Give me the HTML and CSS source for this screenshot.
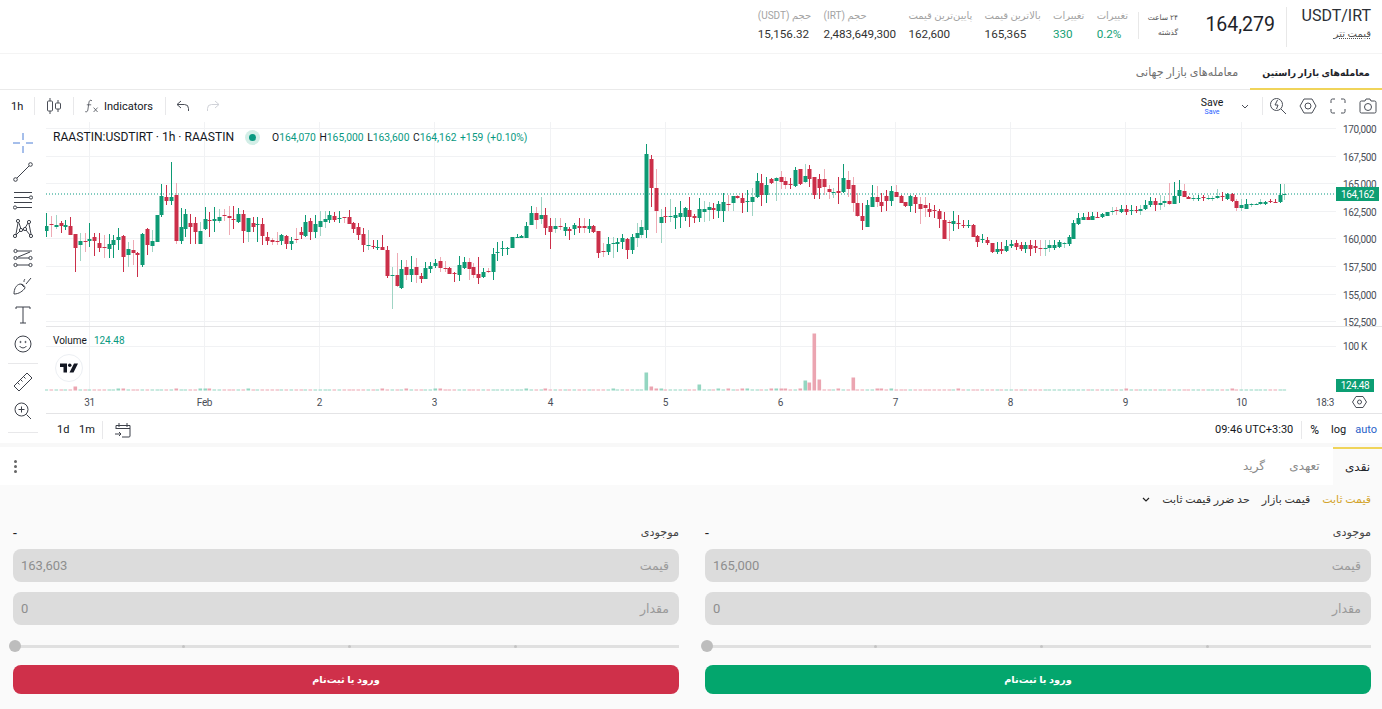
FILE: index.html
```html
<!DOCTYPE html>
<html lang="fa" dir="rtl">
<head>
<meta charset="utf-8">
<title>USDT/IRT</title>
<link rel="stylesheet" href="styles.css">
</head>
<body>
<header class="topbar">
  <div class="pair"><div class="pair-name">USDT/IRT</div><div class="pair-sub">قیمت تتر</div></div>
  <div class="last-price">164,279</div>
  <div class="period"><span>۲۴ ساعت</span><span>گذشته</span></div>
  <div class="stats">
    <div class="stat"><span class="stat-label">تغییرات</span><span class="stat-value up">0.2%</span></div>
    <div class="stat"><span class="stat-label">تغییرات</span><span class="stat-value up">330</span></div>
    <div class="stat"><span class="stat-label">بالاترین قیمت</span><span class="stat-value">165,365</span></div>
    <div class="stat"><span class="stat-label">پایین‌ترین قیمت</span><span class="stat-value">162,600</span></div>
    <div class="stat"><span class="stat-label">حجم (IRT)</span><span class="stat-value">2,483,649,300</span></div>
    <div class="stat"><span class="stat-label">حجم (USDT)</span><span class="stat-value">15,156.32</span></div>
  </div>
</header>

<nav class="market-tabs">
  <div class="market-tab active">معامله‌های بازار راستین</div>
  <div class="market-tab">معامله‌های بازار جهانی</div>
</nav>

<section class="tv" dir="ltr">
  <div class="tv-top">
    <div class="tv-group">
      <span class="tv-btn interval">1h</span><i class="tv-sep"></i>
      <svg class="ico candles" viewBox="0 0 16 18" width="16" height="18"><path d="M4 1v3M4 14v3M12 3v3M12 12v3" /><rect x="1.5" y="4" width="5" height="10" rx="1"/><rect x="9.5" y="6" width="5" height="6" rx="1"/></svg>
      <i class="tv-sep second"></i>
      <svg class="ico fx" viewBox="0 0 20 18" width="16" height="18"><path d="M10 2.5C8 1 6.6 2 6.3 4L4.8 14C4.5 16 3 17 1.500 16M3.500 7.500H9M12 11l5 5.500M17 11l-5 5.500"/></svg>
      <span class="tv-btn indicators">Indicators</span><i class="tv-sep third"></i>
      <svg class="ico undo" viewBox="0 0 14 12" width="14" height="12"><path d="M5 1 1 4.500 5 8M1 4.500h7.500a4 4 0 0 1 4 4V11"/></svg>
      <svg class="ico redo" viewBox="0 0 14 12" width="14" height="12"><path d="M9 1l4 3.500L9 8M13 4.500H5.500a4 4 0 0 0-4 4V11"/></svg>
    </div>
    <div class="tv-group">
      <div class="save"><span>Save</span><small>Save</small></div>
      <svg class="ico chev" viewBox="0 0 8 5" width="8" height="5"><path d="M1 1l3 3 3-3"/></svg>
      <i class="tv-sep save-sep"></i>
      <svg class="ico right-ico first" viewBox="0 0 18 18" width="18" height="18"><circle cx="7.500" cy="7.500" r="6"/><path d="M12 12l5 5M8.500 3 6 8h3l-1.500 4"/></svg>
      <svg class="ico right-ico" viewBox="0 0 18 18" width="18" height="18"><path d="M5 2h8l4 7-4 7H5L1 9z"/><circle cx="9" cy="9" r="3"/></svg>
      <svg class="ico right-ico" viewBox="-1 0 18 16" width="18" height="16"><path d="M1 5V2.500A1.500 1.500 0 0 1 2.500 1H5M11 1h2.500A1.500 1.500 0 0 1 15 2.500V5M15 11v2.500a1.500 1.500 0 0 1-1.500 1.500H11M5 15H2.500A1.500 1.500 0 0 1 1 13.500V11"/></svg>
      <svg class="ico right-ico" viewBox="0 0 18 16" width="18" height="16"><path d="M6 3l1-2h4l1 2h3.500A1.500 1.500 0 0 1 17 4.500v9a1.500 1.500 0 0 1-1.500 1.500h-13A1.500 1.500 0 0 1 1 13.500v-9A1.500 1.500 0 0 1 2.500 3z"/><circle cx="9" cy="9" r="3.500"/></svg>
    </div>
  </div>
  <div class="tv-body">
    <aside class="tools">
      <svg class="tool cross" viewBox="0 0 20 20" width="20" height="20"><path d="M10 0v7M10 13v7M0 10h7M13 10h7"/></svg>
      <svg class="tool" viewBox="0 0 20 20" width="20" height="20"><circle cx="2.500" cy="17.500" r="1.800"/><circle cx="17.500" cy="2.500" r="1.800"/><path d="M4 16 16 4"/></svg>
      <svg class="tool" viewBox="0 0 20 20" width="20" height="20"><path d="M1 2.500h18M1 7.500h15M1 12.500h18M4 17.500h15"/><circle cx="18" cy="7.500" r="1.600"/><circle cx="2" cy="17.500" r="1.600"/></svg>
      <svg class="tool" viewBox="0 0 20 20" width="20" height="20"><circle cx="5" cy="2" r="1.600"/><circle cx="16" cy="3" r="1.600"/><circle cx="2" cy="17" r="1.600"/><circle cx="18" cy="17" r="1.600"/><circle cx="8" cy="11" r="1.600"/><circle cx="12" cy="10" r="1.600"/><path d="M5 4 3 15M16 5l2 10M6 4l2 6M15 4l-3 5M3 16l4-4M17 16l-4-5M9.500 11h1"/></svg>
      <svg class="tool" viewBox="0 0 20 20" width="20" height="20"><circle cx="2.500" cy="3" r="1.600"/><circle cx="2.500" cy="10" r="1.600"/><circle cx="2.500" cy="17" r="1.600"/><circle cx="17.500" cy="10" r="1.600"/><circle cx="17.500" cy="17" r="1.600"/><path d="M4 3h15M4 10h12M4 17h12M5 9l12-5" /></svg>
      <svg class="tool" viewBox="0 0 20 20" width="20" height="20"><path d="M1 18c0-5 2-9 6-10 3 0 5 2 5 4-2 3-6 6-11 6zM8 8l3 3M13 8l5-6M12 3c-1 1-1 2-1 3"/></svg>
      <svg class="tool" viewBox="0 0 20 20" width="20" height="20"><path d="M3 4V2h14v2M10 2v16M7 18h6"/></svg>
      <svg class="tool" viewBox="0 0 20 20" width="20" height="20"><circle cx="10" cy="10" r="8"/><path d="M6.500 12c2 2.500 5 2.500 7 0"/><circle cx="7.500" cy="8" r=".6"/><circle cx="12.500" cy="8" r=".6"/></svg>
      <i class="tools-sep"></i>
      <svg class="tool" viewBox="0 0 20 20" width="20" height="20"><path d="M1 14 14 1l5 5L6 19zM4.500 10.500l2 2M7.500 7.500l2 2M10.500 4.500l2 2"/></svg>
      <svg class="tool" viewBox="0 0 20 20" width="20" height="20"><circle cx="8.500" cy="8.500" r="6.500"/><path d="M13.500 13.500 18 18M5.500 8.500h6M8.500 5.500v6"/></svg>
      <i class="tools-sep last"></i>
    </aside>
    <div class="tv-main">
      <div class="plot-wrap">
        <svg id="plot" class="plot" viewBox="45 122 1337 292" width="1337" height="292"></svg>
        <div class="legend">
          <span class="legend-title">RAASTIN:USDTIRT · 1h · RAASTIN</span>
          <span class="status"></span>
          <span class="ohlc"><b>O</b>164,070 <b>H</b>165,000 <b>L</b>163,600 <b>C</b>164,162 +159 (+0.10%)</span>
        </div>
        <div class="vol-legend"><span>Volume</span><em>124.48</em></div>
        <div class="tv-logo"><svg viewBox="0 0 36 20" width="18" height="10"><path d="M0 1h14v18H7V8H0z"/><circle cx="19.500" cy="4.500" r="3.500"/><path d="M36 1 27 19h-8l9-18z"/></svg></div>
      </div>
      <div class="tv-bottom">
        <div class="tv-group">
          <span class="range">1d</span><span class="range">1m</span><i class="tv-sep range-sep"></i>
          <svg class="ico cal" viewBox="0 0 16 16" width="16" height="16"><path d="M1 7V3.500h14V14a1 1 0 0 1-1 1H7M1 6.500h14M4 1v4M12 1v4M0 12h6M4 10l2 2-2 2"/></svg>
        </div>
        <div class="tv-group">
          <span class="clock">09:46 UTC+3:30</span><i class="tv-sep clock-sep"></i>
          <span class="mode pct">%</span><span class="mode">log</span><span class="mode auto">auto</span>
        </div>
      </div>
    </div>
  </div>
</section>

<section class="trade">
  <div class="trade-tabs">
    <div class="trade-tab active">نقدی</div>
    <div class="trade-tab margin">تعهدی</div>
    <div class="trade-tab grid">گرید</div>
    <div class="kebab"><i></i><i></i><i></i></div>
  </div>
  <div class="trade-body">
    <div class="order-types">
      <span class="otype active">قیمت ثابت</span>
      <span class="otype">قیمت بازار</span>
      <span class="otype">حد ضرر قیمت ثابت</span>
      <svg class="otype-chev" viewBox="0 0 8 5" width="8" height="5"><path d="M1 1l3 3 3-3"/></svg>
    </div>
    <div class="forms">
      <div class="form">
        <div class="balance"><span>موجودی</span><span class="dash">-</span></div>
        <div class="field"><span>قیمت</span><span class="num">165,000</span></div>
        <div class="field"><span>مقدار</span><span class="num">0</span></div>
        <div class="slider"><i class="tick"></i><i class="tick"></i><i class="tick"></i><b class="thumb"></b></div>
        <button class="submit buy">ورود یا ثبت‌نام</button>
      </div>
      <div class="form">
        <div class="balance"><span>موجودی</span><span class="dash">-</span></div>
        <div class="field"><span>قیمت</span><span class="num">163,603</span></div>
        <div class="field"><span>مقدار</span><span class="num">0</span></div>
        <div class="slider"><i class="tick"></i><i class="tick"></i><i class="tick"></i><b class="thumb"></b></div>
        <button class="submit sell">ورود یا ثبت‌نام</button>
      </div>
    </div>
  </div>
</section>
<script src="chart.js"></script>
</body>
</html>
```
FILE: styles.css
```css
* { box-sizing: border-box; }
html, body { margin: 0; height: 709px; overflow: hidden; }
body { background: #f8f8f8; font-family: Roboto, "DejaVu Sans", sans-serif; color: #1e2329; width: 1382px; }

.topbar { height: 54px; background: #fff; display: flex; align-items: center; padding-right: 11px; border-bottom: 1px solid #f4f4f4; }
.pair { width: 85px; height: 40px; border-left: 1px solid #e8e8e8; display: flex; flex-direction: column; justify-content: center; padding-bottom: 5px; }
.pair-name { font-size: 16px; font-weight: 400; direction: ltr; text-align: right; line-height: 20px; color: #2b2f36; }
.pair-sub { font-size: 10px; color: #555; line-height: 16px; text-decoration: underline dotted; }
.last-price { width: 82px; padding-right: 11px; padding-bottom: 4px; font-size: 19.500px; color: #1e2329; direction: ltr; text-align: right; }
.period { width: 52px; padding-right: 12px; margin-right: 14px; height: 27px; border-left: 1px solid #e8e8e8; display: flex; flex-direction: column; justify-content: space-between; font-size: 7.500px; line-height: 12px; color: #555; text-align: right; white-space: nowrap; margin-bottom: 2px; }
.stats { display: flex; gap: 12.300px; margin-right: 10px; margin-bottom: 3px; }
.stat { display: flex; flex-direction: column; align-items: flex-end; gap: 3px; }
.stat-label { font-size: 10px; color: #a3a3a3; line-height: 14px; white-space: nowrap; }
.stat-value { font-size: 11.700px; color: #333; line-height: 16px; direction: ltr; }
.stat-value.up { color: #16a176; }

.market-tabs { height: 36px; background: #fff; border-bottom: 1px solid #eaeaea; display: flex; }
.market-tab { width: 126px; text-align: center; font-size: 11.200px; line-height: 37px; color: #707070; white-space: nowrap; }
.market-tab.active { width: 132px; font-size: 9.300px; color: #1e2329; font-weight: 700; border-bottom: 2px solid #f0d45a; height: 36px; }

.tv { background: #fff; height: 353px; }
.tv-top { height: 32px; display: flex; justify-content: space-between; align-items: center; padding: 0 5px 0 0; }
.tv-group { display: flex; align-items: center; }
.tv-btn { font-size: 11px; color: #131722; }
.interval { margin-left: 11px; width: 23px; }
.tv-sep { width: 1px; height: 18px; background: #e8e8ea; display: block; }
.ico { fill: none; stroke: #4a4e57; stroke-width: 1; display: block; }
.candles { margin: 0 11px 0 11px; }
.fx { margin: 0 4px 0 10px; }
.indicators { width: 61px; }
.undo { margin-left: 10px; }
.redo { margin-left: 16px; stroke: #d0d2d8; }
.save { width: 30px; text-align: center; display: flex; flex-direction: column; }
.save span { font-size: 10.500px; line-height: 11px; color: #131722; }
.save small { font-size: 7px; line-height: 8px; color: #2962ff; }
.chev { margin: 0 0 0 14px; }
.save-sep { margin: 0 0 0 13px; }
.right-ico { margin-left: 12px; }
.right-ico.first { margin-left: 6px; }

.tv-body { display: flex; height: 321px; }
.tools { width: 45px; flex: none; display: flex; flex-direction: column; align-items: center; padding-top: 11px; gap: 8.700px; }
.tool { fill: none; stroke: #3d414a; stroke-width: 1; display: block; }
.tool.cross { stroke: #4d7fd6; }
.tools-sep { display: block; width: 30px; height: 1px; background: #e8e8ea; }
.tools-sep.last { margin-top: 2px; }
.tv-main { flex: 1; min-width: 0; }
.plot-wrap { position: relative; height: 292px; }
.plot { display: block; }
.legend { position: absolute; left: 8px; top: 7px; display: flex; align-items: center; height: 16px; }
.legend-title { font-size: 12.100px; color: #131722; white-space: nowrap; }
.status { width: 7px; height: 7px; border-radius: 50%; background: #089981; margin: 0 16px 0 15px; box-shadow: 0 0 0 4px #d3eee7; }
.ohlc { font-size: 10.300px; word-spacing: 1px; color: #089981; white-space: nowrap; }
.ohlc b { font-weight: 400; color: #131722; }
.vol-legend { position: absolute; left: 8px; top: 213px; font-size: 10px; display: flex; gap: 7px; color: #131722; }
.vol-legend em { font-style: normal; color: #089981; }
.tv-logo { position: absolute; left: 10px; top: 232px; width: 28px; height: 28px; border-radius: 50%; background: #fff; border: 1px solid #eceff3; display: flex; align-items: center; justify-content: center; }
.tv-logo svg { display: block; fill: #131722; }
.tv-bottom { height: 29px; display: flex; justify-content: space-between; align-items: center; padding: 2px 5px 0 12px; }
.range { font-size: 11px; width: 22px; text-align: left; color: #131722; }
.range-sep { margin: 0 12px 0 1px; }
.cal { stroke: #3d414a; }
.clock { font-size: 11px; color: #131722; }
.clock-sep { margin: 0 8px 0 8px; }
.mode { font-size: 11px; margin-left: 12px; color: #131722; }
.mode.pct { margin-left: 0; font-size: 12px; }
.mode.auto { color: #2962c9; margin-left: 9px; }

.trade { margin-top: 4px; }
.trade-tabs { height: 38px; background: #fff; display: flex; align-items: stretch; position: relative; }
.trade-tab { font-size: 12px; line-height: 38px; color: #8a8a8a; text-align: center; white-space: nowrap; }
.trade-tab.active { width: 49px; color: #1e2329; background: #fafafa; border-top: 2px solid #f0d45a; line-height: 36px; }
.trade-tab.margin { width: 57px; }
.trade-tab.grid { width: 44px; }
.kebab { position: absolute; left: 14px; top: 13px; display: flex; flex-direction: column; gap: 2px; }
.kebab i { width: 3px; height: 3px; border-radius: 50%; background: #666; display: block; }
.trade-body { background: #fafafa; height: 224px; padding: 0 11px 0 13px; }
.order-types { height: 29px; display: flex; align-items: center; gap: 12px; font-size: 11px; color: #333; }
.otype.active { color: #d3a42c; }
.otype-chev { fill: none; stroke: #222; stroke-width: 1.200; }
.forms { display: flex; gap: 26px; }
.form { width: 666px; }
.balance { height: 35px; display: flex; justify-content: space-between; align-items: center; font-size: 11.200px; color: #444; padding-top: 2px; }
.dash { font-size: 14px; color: #222; }
.field { height: 33px; background: #dcdcdc; border-radius: 8px; margin-bottom: 10px; display: flex; justify-content: space-between; align-items: center; padding: 0 10px 0 8px; font-size: 12.500px; color: #9a9a9a; }
.field .num { font-size: 13px; color: #8e8e8e; direction: ltr; }
.slider { height: 3px; background: #e0e0e0; position: relative; margin: 20px 0 17px; padding-left: 6px; display: flex; justify-content: center; gap: 163px; align-items: center; }
.tick { width: 3px; height: 3px; background: #c4c4c4; border-radius: 50%; display: block; }
.thumb { position: absolute; left: -4px; top: -5px; width: 12px; height: 12px; border-radius: 50%; background: #bdbdbd; }
.submit { display: block; width: 100%; height: 29px; border: 0; border-radius: 8px; color: #fff; font-family: inherit; font-size: 9.800px; font-weight: 700; }
.submit.buy { background: #03a66d; }
.submit.sell { background: #cf304a; }
```
FILE: chart.js
```js
var D = "G213,226,231,237 r216,224,225,237 g215,225,227,229 R221,223,226,233 G220,225,227,230 R217,226,235,235 R234,234,248,272 g233,241,245,261 r233,241,242,252 G223,239,241,247 R233,237,241,256 R233,243,248,252 r235,247,248,258 G234,244,249,258 G235,240,245,258 G228,237,240,250 R235,236,257,272 g242,249,255,267 r240,250,253,265 R252,253,255,277 G233,234,265,267 R228,229,245,255 g230,241,246,252 G215,215,242,242 G184,196,215,217 R185,197,201,205 G162,197,201,205 r183,195,241,244 G208,227,241,244 G209,214,229,237 R214,223,227,244 R217,223,232,244 g222,231,244,244 G207,219,229,230 R212,220,221,237 G207,219,221,232 g209,217,221,223 r209,215,216,221 r206,216,218,235 R206,219,220,229 G208,214,222,223 R210,214,231,243 g218,218,232,242 R217,223,227,232 G217,224,225,242 R218,224,236,245 R232,237,241,245 r238,240,242,245 r232,241,242,245 G234,235,241,245 R235,236,244,249 G237,241,244,250 r228,239,240,243 R227,232,235,239 G215,222,236,237 R218,221,232,240 G215,224,232,238 g211,221,227,236 g211,219,222,228 G211,215,220,223 R212,216,220,222 G211,218,219,223 r217,217,218,223 R210,217,224,224 R222,223,229,233 R223,227,235,240 R228,234,245,252 g230,245,246,250 R240,246,247,249 G240,247,248,250 R235,247,250,250 R246,250,276,278 g267,275,276,309 r253,275,286,287 G260,269,288,289 r260,267,275,280 G256,269,275,282 r258,267,275,283 R273,276,279,283 G262,268,279,279 G262,266,269,273 G259,263,266,268 r257,261,268,272 r261,268,269,272 R267,268,274,274 R272,273,274,282 G256,265,275,281 G257,262,268,269 r258,262,269,280 r263,267,275,278 R257,274,278,284 G268,272,277,278 r268,271,272,273 G248,254,272,280 G242,252,253,261 G241,248,249,256 G247,248,249,255 G237,237,248,248 G234,237,238,238 G235,236,238,238 G222,226,238,238 G206,213,225,225 r207,213,220,229 g197,215,219,224 R208,215,228,235 R218,226,232,249 g218,226,229,233 r218,226,227,230 G223,227,231,236 R227,229,231,240 G223,225,229,235 R218,226,228,233 r218,226,228,233 G219,226,229,233 R225,226,232,233 R231,231,253,258 r243,251,252,257 G237,244,252,255 g237,243,244,258 G238,242,244,252 G234,238,242,249 R238,239,250,259 G234,237,250,254 g223,233,238,247 g220,227,235,238 G144,154,230,238 R155,159,188,207 r169,188,211,233 g209,217,223,243 R207,216,217,223 g199,216,217,222 G207,215,218,229 G201,213,217,228 G207,208,217,221 R197,210,217,227 R214,216,218,223 G198,209,218,222 g201,209,212,222 g202,207,210,221 R203,208,210,219 G201,204,211,218 G193,202,211,222 r195,204,205,211 g196,196,203,211 r195,196,198,199 R193,198,203,213 G190,201,202,212 g188,197,202,216 G173,181,197,198 R174,183,195,206 G177,185,195,203 R178,179,183,184 g177,178,181,201 r171,177,182,189 r177,181,185,189 R178,184,185,189 G167,170,186,187 R169,169,184,185 g164,176,182,183 R165,169,179,187 R177,177,195,199 R174,179,188,199 r169,179,187,195 r185,189,192,199 g188,192,193,198 R177,191,193,204 G164,178,192,193 r171,180,189,197 r177,185,203,212 r193,203,216,217 R203,216,221,230 G200,205,227,227 G185,197,207,207 r186,197,202,207 R193,202,206,212 R190,196,201,211 G186,191,201,206 r185,192,197,197 R195,196,203,203 R202,202,206,207 G195,196,206,212 R195,197,204,213 r197,204,209,224 r197,205,208,217 R203,209,212,217 R205,210,211,218 R209,211,219,228 R212,220,239,239 r220,222,223,241 G211,221,224,231 R215,223,224,229 R220,225,226,228 G220,225,226,228 R224,225,237,237 R235,236,242,247 G234,239,240,243 R237,240,243,245 R243,243,252,253 G242,249,252,254 R242,249,251,254 G240,246,251,252 G240,244,246,248 R240,243,247,250 R242,245,249,251 G242,245,249,253 R240,245,249,256 R240,246,248,253 r240,248,249,256 g240,248,249,256 g240,245,248,252 G240,245,248,250 G240,242,247,248 g242,243,244,248 G235,237,244,246 G220,223,239,239 G213,218,224,225 G213,217,220,220 R212,217,220,220 G212,216,220,220 R212,217,218,218 G213,214,217,218 G212,212,216,216 g207,211,212,215 r207,210,211,215 G205,209,212,213 R205,209,212,215 G205,210,211,215 R206,210,211,213 g205,209,211,215 G200,205,209,210 G197,201,205,207 R198,201,205,211 g195,203,205,210 g196,201,203,207 r183,201,204,205 G182,196,204,203 G180,190,196,203 r184,191,197,197 R196,197,199,199 g195,198,199,201 G195,198,199,201 R195,197,198,201 g195,198,199,200 g196,198,199,201 g189,196,198,199 R192,196,197,201 G193,194,199,200 R193,194,201,202 r199,201,208,211 g199,205,208,211 G199,204,209,209 g203,204,205,207 g203,204,205,205 g199,202,204,205 G201,202,204,205 R199,201,202,203 R199,202,203,203 G184,195,202,203 g184,194,195,200".split(" ");
var VOL = {6:4,27:2,100:2,104:2,125:18,126:4,127:2,128:2,136:6,145:2,146:2,157:2,158:10,159:8,160:57,161:11,165:2,168:13,173:2,174:2,176:2,151:2,152:2,153:2,154:2,15:2,16:2,32:2,33:2,34:2,42:2,70:2,75:2,81:2,82:2,118:2,140:2,142:2,190:2,225:2,247:2};
var GREEN = "#0d9a74", RED = "#cb2f49", PGREEN = "#9fd4c4", PRED = "#eeaab4";
var H = [128.5,156.5,183.5,211.5,238.5,266.5,294.5,321.5];
var P = ["170,000","167,500","165,000","162,500","160,000","157,500","155,000","152,500"];
var V = [89.5,204.5,319.5,434.5,550.5,665.5,780.5,895.5,1010.5,1125.5,1241.5];
var T = ["31","Feb","2","3","4","5","6","7","8","9","10"];
var o = [];
function r(x, y, w, h, f) { o.push('<rect x="' + x + '" y="' + y + '" width="' + w + '" height="' + h + '" fill="' + f + '"/>'); }
function l(a, b, c, d, s, extra) { o.push('<line x1="' + a + '" y1="' + b + '" x2="' + c + '" y2="' + d + '" stroke="' + s + '" ' + (extra || "") + '/>'); }
function t(x, y, s, a, f) { o.push('<text x="' + x + '" y="' + y + '" text-anchor="' + (a || "start") + '" font-size="10" letter-spacing="-0.35" font-family="Roboto,sans-serif" fill="' + (f || "#4a4e57") + '">' + s + '</text>'); }
H.concat([346.5]).forEach(function (y) { l(46, y, 1336, y, "#f1f2f4"); });
V.forEach(function (x) { l(x, 122, x, 391, "#f1f2f4"); });
l(46, 326.5, 1382, 326.5, "#e4e4e6");
l(46, 413.5, 1382, 413.5, "#e4e4e6");
l(46, 194, 1336, 194, "#089981", 'stroke-dasharray="1 2"');
D.forEach(function (s, i) {
  var k = s.charAt(0), a = s.slice(1).split(",").map(Number), x = 46.1 + 4.8 * i, up = k === "G" || k === "g";
  var vh = VOL[i] || 1, hx = Math.round(x);
  r(hx - 1.5, 390.5 - vh, 3.6, vh, up ? "#94d6c1" : "#eba5b1");
  var wick = k === "G" ? GREEN : k === "R" ? RED : k === "g" ? PGREEN : PRED;
  r(hx, a[0], 1, a[3] - a[0], wick);
  r(hx - 1.5, a[1], 4, Math.max(1, a[2] - a[1]), up ? GREEN : RED);
});
P.forEach(function (s, i) { t(1343, H[i] + 4, s); });
t(1343, 349.5, "100 K");
T.forEach(function (s, i) { t(V[i], 405.5, s, "middle"); });
t(1325, 405.5, "18:3", "middle");
r(1336, 187, 43, 14, "#0c9e73");
t(1357.5, 197.5, "164,162", "middle", "#fff");
r(1336, 379, 38, 13, "#0c9e73");
t(1355, 389, "124.48", "middle", "#fff");
o.push('<g fill="none" stroke="#4a4e57"><path d="M1356 396.500h7l3.500 5.500-3.500 5.500h-7l-3.500-5.500z"/><circle cx="1359.500" cy="402" r="2"/></g>');
document.getElementById("plot").innerHTML = o.join("");
```
